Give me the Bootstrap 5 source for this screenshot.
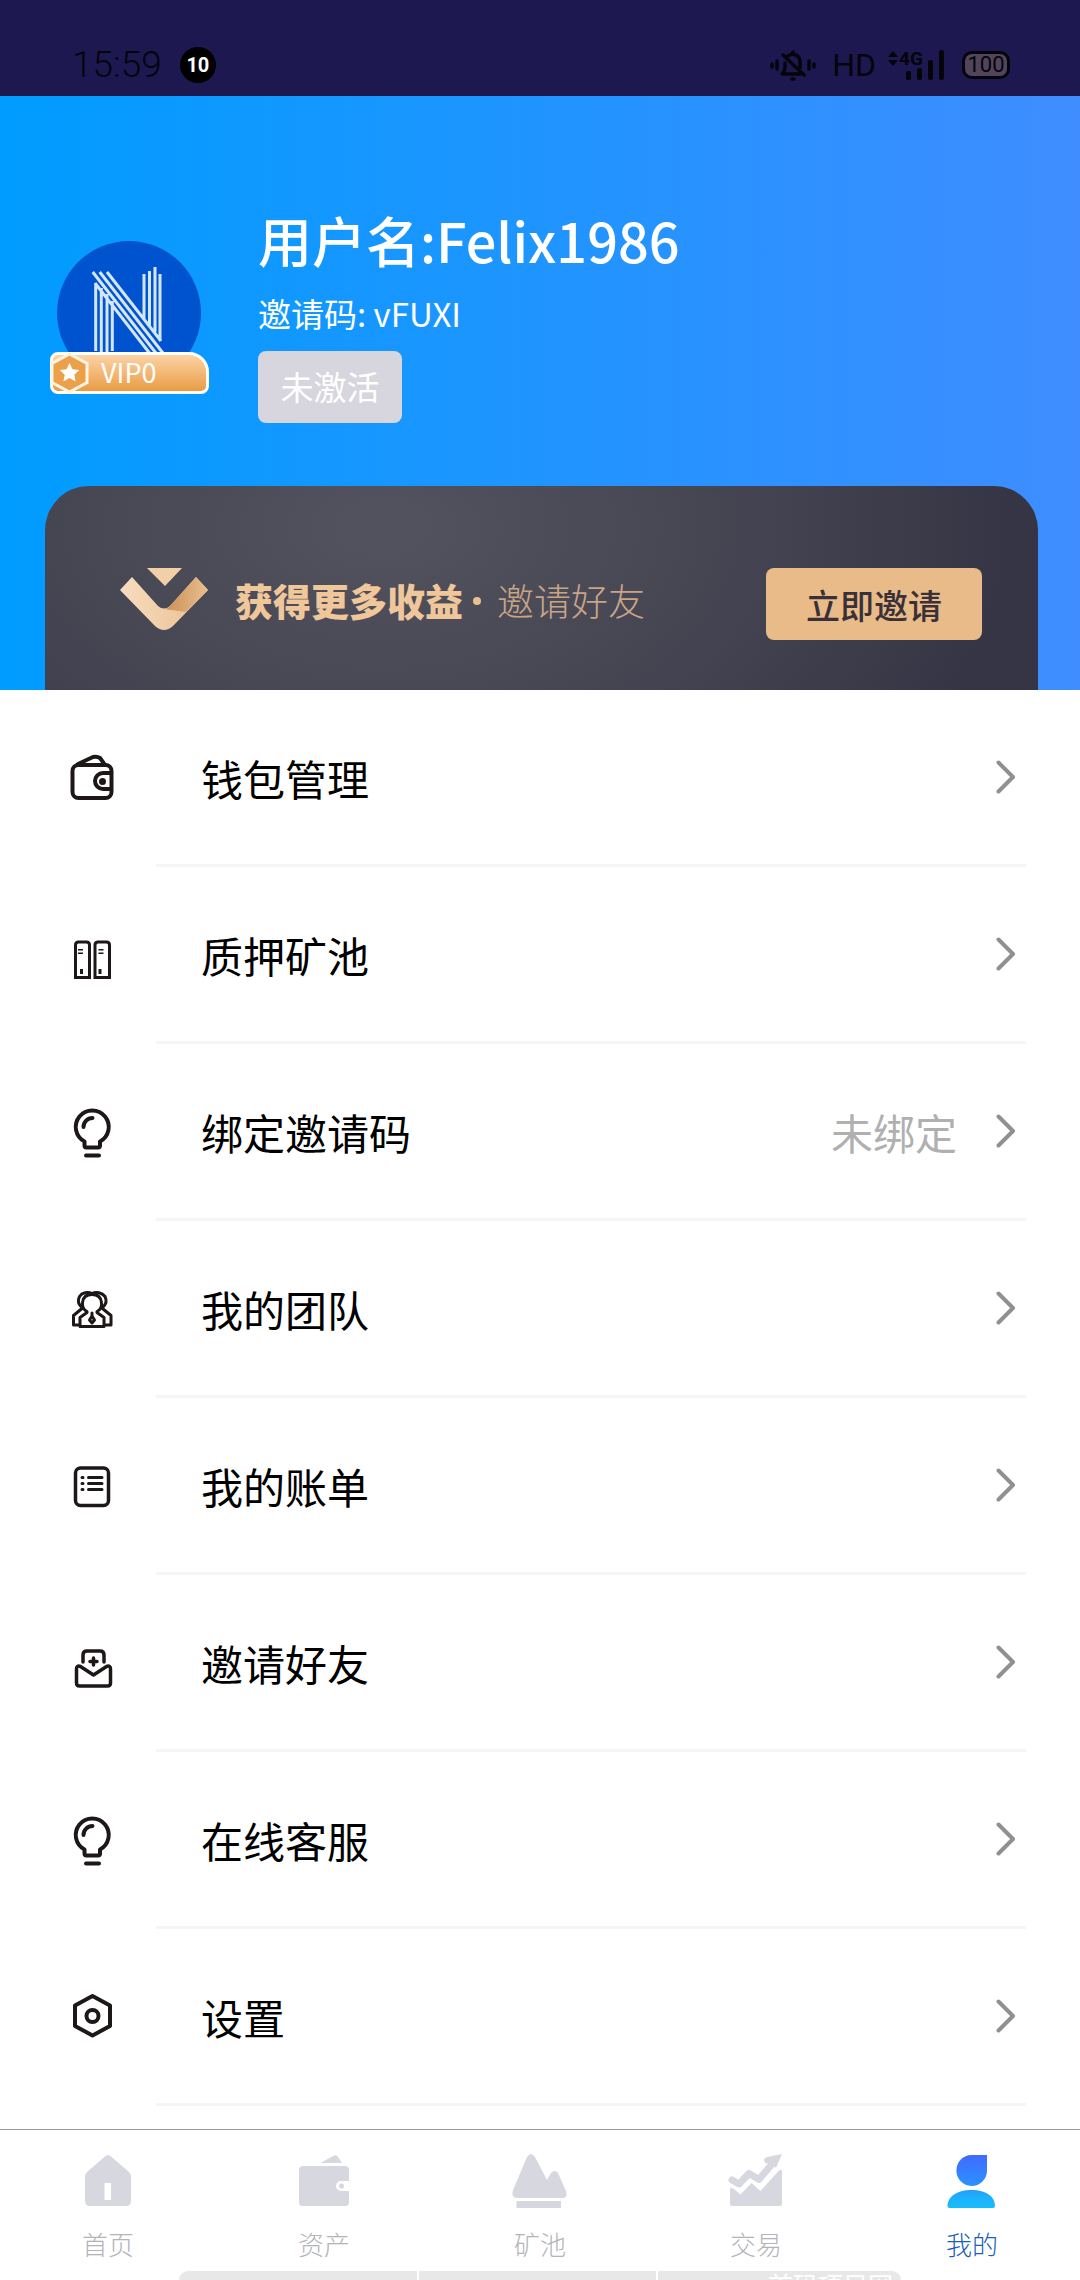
<!DOCTYPE html>
<html lang="zh-CN">
<head>
<meta charset="utf-8">
<meta name="viewport" content="width=device-width, initial-scale=1">
<title>我的</title>
<link href="https://cdn.jsdelivr.net/npm/bootstrap@5.3.0/dist/css/bootstrap.min.css" rel="stylesheet">
<script src="https://cdn.jsdelivr.net/npm/bootstrap@5.3.0/dist/js/bootstrap.bundle.min.js" defer></script>
<style>
  body { font-family: "Noto Sans CJK SC", "Noto Sans", sans-serif; background: #fff; color: #000; }
  a { color: inherit; text-decoration: none; }
  svg { display: block; flex: none; overflow: visible; }
  .statusbar { height: 96px; padding: 34px 70px 0 72px; background: #1e1850; color: #05040a; font-family: Roboto, sans-serif; }
  .clock { font-size: 37px; line-height: 36px; font-weight: 300; }
  .notif { width: 36px; height: 36px; margin-left: 18px; font-size: 20px; background: #000; color: #fff; }
  .hd { font-size: 32px; line-height: 36px; margin: 0 12px 0 16px; }
  .battery { width: 48px; height: 28px; margin-left: 18px; border: 3px solid #05040a; border-radius: 10px; background: #51455c; font-size: 22px; line-height: 22px; font-weight: 400; }

  .hero { background: linear-gradient(90deg, #009cff, #3f8dff); color: #fff; padding: 108px 42px 0 45px; }
  .profile { padding-left: 12px; gap: 57px; }
  .avatar { width: 144px; margin-top: 37px; }
  .vip { left: -7px; top: 111px; width: 159px; height: 42px; padding-left: 48px; border: 3px solid #fff; border-radius: 8px 20px 8px 8px; background: linear-gradient(#fdd3a6, #e89c44); font-size: 27px; line-height: 34px; }
  .vip svg { position: absolute; left: -3px; top: -3px; }
  .username { font-size: 54px; line-height: 72px; font-weight: 500; margin: 0; }
  .invite { font-size: 33px; line-height: 48px; margin: 13px 0 14px; }
  .btn-state { width: 144px; height: 72px; padding: 0; border-radius: 8px; background: #d7d6de; color: #fff; font-size: 33px; }
  .btn-state:hover { background: #cbcad4; color: #fff; }
  .promo { margin-top: 63px; height: 204px; padding: 82px 56px 0 75px; border-radius: 44px 44px 0 0; background: radial-gradient(ellipse 64% 190% at 34% 20%, #53535f, #484855 45%, #353545); color: #eabf91; line-height: 64px; }
  .promo-title { font-size: 38px; line-height: inherit; font-weight: 900; margin: 0 0 0 27px; color: #f0c79a; }
  .promo-sub { font-size: 37px; font-weight: 300; color: #c9a487; }
  .promo-dot { width: 8px; height: 8px; margin: 29px 16px 0 10px; background: #eabf91; }
  .btn-invite { width: 216px; height: 72px; padding: 0; border-radius: 8px; background: #e9bb88; color: #3a3138; font-size: 34px; font-weight: 500; }
  .btn-invite:hover { background: #dfae78; }

  .menu-row { height: 177px; padding: 0 54px 0 68px; gap: 40px; font-size: 42px; }
  .menu-row > svg { margin-bottom: 3px; }
  .menu-body { padding: 0 10px 0 45px; border-bottom: 3px solid #f5f5f5; }
  .menu-value { color: #b0b0b0; margin-right: 39px; }
  .ico { fill: none; stroke: #1d1717; stroke-width: 4; stroke-linecap: round; stroke-linejoin: round; }
  .ico .solid { fill: #1d1717; stroke: none; }
  .ico .fine { stroke-width: 3; }
  .chev { fill: none; stroke: #909090; stroke-width: 4; stroke-linecap: round; stroke-linejoin: round; }

  .tabbar { border-top: 1px solid #999; background: #fff; }
  .tab { flex: 1 1 0; height: 141px; padding-top: 22px; gap: 14px; font-size: 26px; line-height: 44px; font-weight: 200; color: #b4b4b8; }
  .tab svg { fill: #d7d7df; }
  .tab.active { color: #1b5fb8; font-weight: 300; }
  .homebar { height: 9px; padding: 0 179px; gap: 2px; }
  .homebar span { background: #e8e8e8; }
  .homebar span:first-child { border-radius: 9px 0 0 0; }
  .homebar span:last-child { border-radius: 0 9px 0 0; font-size: 25px; line-height: 26px; padding-right: 8px; color: #fff; }
</style>
</head>
<body>
<svg width="0" height="0" class="position-absolute" aria-hidden="true">
  <symbol id="bulb" viewBox="0 0 48 48" overflow="visible">
    <path d="M16.500 34.500v4q0 2 2 2h11.500q2 0 2-2v-4a16.500 16.500 0 1 0-15.500 0z"/>
    <path d="M15.500 20a9 9 0 0 1 9-9M18 48.500h13"/>
  </symbol>
  <symbol id="chevron" viewBox="0 0 20 34"><path d="M2.500 2.500 17 17 2.500 31.500"/></symbol>
</svg>
<div class="d-flex flex-column min-vh-100">
  <div class="statusbar d-flex align-items-center justify-content-between">
    <div class="d-flex align-items-center">
      <span class="clock">15:59</span>
      <span class="notif rounded-circle d-flex align-items-center justify-content-center fw-bold">10</span>
    </div>
    <div class="d-flex align-items-center">
      <svg width="46" height="32" viewBox="0 0 46 32" fill="none" stroke="#05040a" stroke-width="3.500" stroke-linecap="round" stroke-linejoin="round"><path d="M2 15v3M7 12v8M39 12v8M44 15v3M30 25H12q3-3 3-6v-5M17 8c4-5 12-3 13 4v7M13 6l21 20M23 3v1M22 30h2"/></svg>
      <span class="hd">HD</span>
      <svg width="56" height="32" viewBox="0 0 56 32" fill="#05040a"><path d="M0 8 5 2l5 6zM0 11l5 6 5-6z"/><text x="11" y="16" font-size="19" font-weight="700">4G</text><rect x="18" y="22" width="5" height="9" rx="2"/><rect x="29" y="19" width="5" height="12" rx="2"/><rect x="40" y="11" width="5" height="20" rx="2"/><rect x="51" y="1" width="5" height="30" rx="2"/></svg>
      <span class="battery d-flex align-items-center justify-content-center">100</span>
    </div>
  </div>

  <header class="hero">
    <div class="profile d-flex align-items-start">
      <div class="avatar position-relative">
        <svg width="144" height="144" viewBox="0 0 144 144"><circle cx="72" cy="72" r="72" fill="#0053cf"/><path d="M38.700 42v68M44.300 47v68M50 53v62M55.300 60v50M87 33v45M92.500 30v55M98 26v65M103 33v67M38 42l56 72M35.700 31l64 82M42.700 31l64 82M50 31l54 69" fill="none" stroke="#d3e6fb" stroke-width="3"/></svg>
        <div class="vip position-absolute">
          <svg width="39" height="42" viewBox="0 0 39 42"><path d="M19.500 2 37 11.500v19L19.500 40 2 30.500v-19z" fill="#eba04a" stroke="#fff3e2" stroke-width="3"/><path d="m19.500 11 3 6.200 6.800.9-5 4.600 1.300 6.800-6.100-3.400-6.100 3.400 1.300-6.800-5-4.600 6.800-.9z" fill="#fff"/></svg>
          VIP0
        </div>
      </div>
      <div>
        <h1 class="username">用户名:Felix1986</h1>
        <p class="invite">邀请码: vFUXI</p>
        <button type="button" class="btn btn-state d-block">未激活</button>
      </div>
    </div>
    <section class="promo d-flex align-items-start">
      <svg width="88" height="64" viewBox="0 0 88 64"><defs><linearGradient id="gold"><stop stop-color="#f8dcc0"/><stop offset="1" stop-color="#e9bf90"/></linearGradient><linearGradient id="fold"><stop stop-color="#c98f52"/><stop offset="1" stop-color="#e9bf90"/></linearGradient></defs><path d="M27 0h35L45 18z" fill="#f3cfa8"/><path d="M12 9 0 22l35 36q9 8 18 0l35-36L76 9 50 38q-6 5-12 0z" fill="url(#gold)"/><path d="M76 9 88 22 66 44 44 41q4 0 7-4z" fill="url(#fold)"/></svg>
      <h2 class="promo-title">获得更多收益</h2>
      <span class="promo-dot rounded-circle"></span>
      <span class="promo-sub">邀请好友</span>
      <button type="button" class="btn btn-invite ms-auto">立即邀请</button>
    </section>
  </header>

  <main>
    <a href="#" class="menu-row d-flex align-items-center">
      <svg class="ico" width="48" height="48"><rect x="4.500" y="12" width="39" height="33" rx="6"/><path d="M10 11 25 4q4-1 7 1l5 7M43 20H35a8 8 0 0 0 0 16h8"/><circle class="solid" cx="34.500" cy="28.500" r="3.500"/></svg>
      <span class="menu-body d-flex align-items-center flex-grow-1 h-100"><span class="me-auto">钱包管理</span><svg class="chev" width="20" height="34"><use href="#chevron"/></svg></span>
    </a>
    <a href="#" class="menu-row d-flex align-items-center">
      <svg class="ico" width="48" height="48"><path class="fine" stroke-linejoin="miter" d="M7.500 47.500V15q0-3 3-3h8q3 0 3 3v32.500zM27 47.500V15q0-3 3-3h8.500q3 0 3 3v32.500z"/><path class="solid" d="M10 19h5v1.500h-5zM10 22.500h5V24h-5zM30.500 19h5v1.500h-5zM30.500 22.500h5V24h-5zM12 39h3v5h-3zM30.500 39h3v5h-3z"/></svg>
      <span class="menu-body d-flex align-items-center flex-grow-1 h-100"><span class="me-auto">质押矿池</span><svg class="chev" width="20" height="34"><use href="#chevron"/></svg></span>
    </a>
    <a href="#" class="menu-row d-flex align-items-center">
      <svg class="ico" width="48" height="48"><use href="#bulb"/></svg>
      <span class="menu-body d-flex align-items-center flex-grow-1 h-100"><span class="me-auto">绑定邀请码</span><span class="menu-value">未绑定</span><svg class="chev" width="20" height="34"><use href="#chevron"/></svg></span>
    </a>
    <a href="#" class="menu-row d-flex align-items-center">
      <svg class="ico" width="48" height="48"><path class="fine" d="M19 27.500c-4-2-5-5-4.500-9 .5-5 4-8 9.500-8s9 3 9.500 8c.5 4-.5 7-4.500 9v1l7 5v9H12v-9l7-5zM24 9.500c-4-2-10-1-12.500 3-2 4-1 8 2.500 11v1l-8.500 7v9.500H12M24 9.500c4-2 10-1 13 3 2 4 1 8-2.500 11v1l8.500 7v9.500h-7M24 29v3M24 32l-2.500 4L24 39l2.500-3z"/></svg>
      <span class="menu-body d-flex align-items-center flex-grow-1 h-100"><span class="me-auto">我的团队</span><svg class="chev" width="20" height="34"><use href="#chevron"/></svg></span>
    </a>
    <a href="#" class="menu-row d-flex align-items-center">
      <svg class="ico" width="48" height="48"><rect x="7.500" y="7" width="33" height="37.500" rx="5" stroke-width="3.500"/><path class="fine" d="M14 16.500h1M14 22.500h1M14 28.500h1M20.500 16.500H34M20.500 22.500H34M20.500 28.500H34"/></svg>
      <span class="menu-body d-flex align-items-center flex-grow-1 h-100"><span class="me-auto">我的账单</span><svg class="chev" width="20" height="34"><use href="#chevron"/></svg></span>
    </a>
    <a href="#" class="menu-row d-flex align-items-center">
      <svg class="ico" width="48" height="48"><path stroke-width="3.500" d="M15 24v-7q0-4 4-4h13q4 0 4 4v7M25.500 20v7M22 23.500h7M8.500 31q0-4 4-2.500L25.500 37l13-8.500q4-1.500 4 2.500v14q0 3-3 3h-28q-3 0-3-3z"/></svg>
      <span class="menu-body d-flex align-items-center flex-grow-1 h-100"><span class="me-auto">邀请好友</span><svg class="chev" width="20" height="34"><use href="#chevron"/></svg></span>
    </a>
    <a href="#" class="menu-row d-flex align-items-center">
      <svg class="ico" width="48" height="48"><use href="#bulb"/></svg>
      <span class="menu-body d-flex align-items-center flex-grow-1 h-100"><span class="me-auto">在线客服</span><svg class="chev" width="20" height="34"><use href="#chevron"/></svg></span>
    </a>
    <a href="#" class="menu-row d-flex align-items-center">
      <svg class="ico" width="48" height="48"><path d="M24.500 4 42 13.500v20.500L24.500 43.500 7 34V13.500z"/><circle cx="24.500" cy="24" r="6"/></svg>
      <span class="menu-body d-flex align-items-center flex-grow-1 h-100"><span class="me-auto">设置</span><svg class="chev" width="20" height="34"><use href="#chevron"/></svg></span>
    </a>
  </main>

  <footer class="tabbar mt-auto">
    <nav class="d-flex">
      <a href="#" class="tab d-flex flex-column align-items-center"><svg width="56" height="56"><path d="M25 4.500q3-3 6 0L49 20q2 2 2 4v25q0 5-5 5H10q-5 0-5-5V24q0-2 2-4zM24.500 31v17H31V31z" fill-rule="evenodd"/></svg>首页</a>
      <a href="#" class="tab d-flex flex-column align-items-center"><svg width="56" height="56"><path d="M24.500 11 37 4q3-2 5 1l4 6zM7 14h42q4 0 4 4v11h-8a5 5 0 0 0 0 10h8v11q0 4-4 4H7q-4 0-4-4V18q0-4 4-4z"/><circle cx="45.500" cy="34" r="2.500"/></svg>资产</a>
      <a href="#" class="tab d-flex flex-column align-items-center"><svg width="56" height="56"><path d="M1 38 15 5q4-6 8 0l12 23 4-7q4-4 7 0l8 18q2 7-3 7H5q-6 0-4-8zM4.500 49H49v7H4.500z"/></svg>矿池</a>
      <a href="#" class="tab d-flex flex-column align-items-center"><svg width="56" height="56"><path d="m4 28 7 4L21 21.500l10 6L44 12" fill="none" stroke="#d7d7df" stroke-width="7" stroke-linecap="round" stroke-linejoin="round"/><path d="M36 8q0-2 3-3l15-3-6 14-4-4-7-1zM2 37q1-2 4 0l6.500 5.500 11-11.500 9 8L51 18.500q3-2 3 1V52q0 2-2 2H4q-2 0-2-2z"/></svg>交易</a>
      <a href="#" class="tab active d-flex flex-column align-items-center" aria-current="page"><svg width="56" height="56"><defs><linearGradient id="me" gradientUnits="userSpaceOnUse" x1="28" y1="2" x2="28" y2="56"><stop stop-color="#4269ff"/><stop offset=".6" stop-color="#2a92ff"/><stop offset=".8" stop-color="#1cb0fb"/><stop offset="1" stop-color="#18bdfa"/></linearGradient></defs><path d="M27.500 3H43v16a15.300 15.500 0 1 1-15.500-16zM3.500 54C4 43 15 38 27.500 38S51 43 51 54q0 2-2 2H5.500q-2 0-2-2z" fill="url(#me)"/></svg>我的</a>
    </nav>
    <div class="homebar d-flex"><span class="w-100"></span><span class="w-100"></span><span class="w-100 overflow-hidden text-end">首码项目网</span></div>
  </footer>
</div>
</body>
</html>
